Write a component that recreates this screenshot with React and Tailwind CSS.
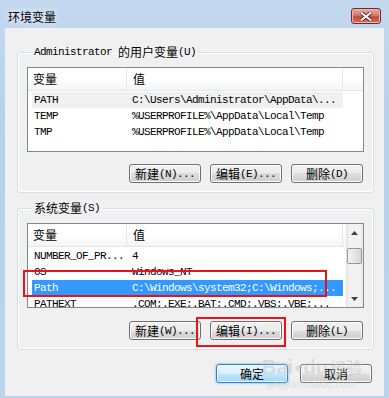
import React from "react";

const CJK = /[\u3000-\u9fff\uff00-\uffef]/;

// split a label into CJK / latin runs so latin gets the narrow mono face
function Txt({ s }) {
  const runs = [];
  for (const ch of s) {
    const c = CJK.test(ch);
    if (runs.length && runs[runs.length - 1].c === c) runs[runs.length - 1].t += ch;
    else runs.push({ c, t: ch });
  }
  return (
    <>
      {runs.map((r, i) =>
        r.c ? (
          <span key={i} className="align-top font-['Noto_Sans_CJK_SC'] text-[12px] leading-[16px]">
            {r.t}
          </span>
        ) : (
          <span
            key={i}
            className="align-top font-['Liberation_Mono'] text-[11px] leading-[16px] tracking-[-0.6px] whitespace-pre"
          >
            {r.t}
          </span>
        )
      )}
    </>
  );
}

function Btn({ label, focus }) {
  return (
    <div
      className={`w-[72px] h-[19px] rounded-[3px] border flex items-center justify-center leading-[16px] text-black ${
        focus
          ? "border-[#3c7fb1] bg-[linear-gradient(#eaf6fd_0%,#d9f0fc_50%,#bee6fd_50%,#a7d9f5_100%)] shadow-[0_0_2px_1px_#9fd5f5,inset_0_0_0_1px_#e9f6fd]"
          : "border-[#707070] bg-[linear-gradient(#f2f2f2_0%,#ebebeb_50%,#dddddd_50%,#cfcfcf_100%)] shadow-[inset_0_0_0_1px_#fcfcfc]"
      }`}
    >
      <Txt s={label} />
    </div>
  );
}

function Scrollbar() {
  return (
    <div className="w-[17px] flex flex-col bg-[linear-gradient(90deg,#e3e3e3,#f2f2f2_20%,#f2f2f2_80%,#e8e8e8)]">
      <div className="h-[17px] flex items-center justify-center">
        <svg width="7" height="4" viewBox="0 0 7 4">
          <path d="M0 4 L3.5 0 L7 4 Z" fill="#404040" />
        </svg>
      </div>
      <div className="mt-[7px] mx-[1px] h-[16px] rounded-[2px] border border-[#979797] bg-[linear-gradient(90deg,#f3f3f3,#e6e6e6_50%,#d6d6d6)]" />
      <div className="flex-1" />
      <div className="h-[17px] flex items-center justify-center">
        <svg width="7" height="4" viewBox="0 0 7 4">
          <path d="M0 0 L3.5 4 L7 0 Z" fill="#404040" />
        </svg>
      </div>
    </div>
  );
}

function VarList({ rows, scroll }) {
  return (
    <div className="h-[85px] border border-[#828790] bg-white flex overflow-hidden">
      <div className="flex-1 min-w-0 flex flex-col">
        <div className="flex h-[23px] shrink-0 border-b border-[#e5e5e5] bg-[linear-gradient(#ffffff,#ffffff_50%,#f3f4f6)]">
          <div className="w-[99px] shrink-0 border-r border-[#e3e8ee] pl-[5px] flex items-center">
            <Txt s="变量" />
          </div>
          <div className="w-[216px] shrink-0 border-r border-[#e3e8ee] pl-[6px] flex items-center">
            <Txt s="值" />
          </div>
          <div className="flex-1" />
        </div>
        <div className="pt-[1px] flex flex-col">
          {rows.map((r) => (
            <div
              key={r.name}
              className={`ml-[4px] w-[311px] h-[16px] shrink-0 flex leading-[16px] whitespace-nowrap ${
                r.sel ? "bg-[#3399ff] text-white" : r.soft ? "bg-[#f0f0f0] text-black" : "text-black"
              }`}
            >
              <div className="w-[95px] shrink-0 pl-[2px] overflow-hidden">
                <Txt s={r.name} />
              </div>
              <div className="flex-1 pl-[5px] overflow-hidden">
                <Txt s={r.value} />
              </div>
            </div>
          ))}
        </div>
      </div>
      {scroll && <Scrollbar />}
    </div>
  );
}

function Group({ title, children }) {
  return (
    <fieldset className="rounded-[3px] border border-[#d5dfe5] shadow-[inset_0_0_0_1px_#ffffff] px-[9px] pt-[7px] pb-[9px]">
      <legend className="ml-[5px] px-[2px] h-[16px] leading-[16px] text-black">
        <Txt s={title} />
      </legend>
      {children}
    </fieldset>
  );
}

const userVars = [
  { name: "PATH", value: "C:\\Users\\Administrator\\AppData\\...", soft: true },
  { name: "TEMP", value: "%USERPROFILE%\\AppData\\Local\\Temp" },
  { name: "TMP", value: "%USERPROFILE%\\AppData\\Local\\Temp" },
];

const sysVars = [
  { name: "NUMBER_OF_PR...", value: "4" },
  { name: "OS", value: "Windows_NT" },
  { name: "Path", value: "C:\\Windows\\system32;C:\\Windows;...", sel: true },
  { name: "PATHEXT", value: ".COM;.EXE;.BAT;.CMD;.VBS;.VBE;..." },
];

export default function App() {
  return (
    <div className="relative w-[389px] h-[398px] overflow-hidden flex flex-col bg-[linear-gradient(#c4d9ef,#b9d0e9_30%,#bcd3ec)]">
      {/* title bar */}
      <div className="h-[28px] shrink-0 flex items-start justify-between pl-[8px] pr-[8px] pt-[8px]">
        <span className="font-['Noto_Sans_CJK_SC'] text-[12px] leading-[17px] text-black [text-shadow:0_0_6px_#ffffff]">
          环境变量
        </span>
        <div className="w-[30px] h-[16px] rounded-[3px] border border-[#6d2a2a] bg-[linear-gradient(#e9a99f,#d77a6c_45%,#c24b3a_55%,#d06f5c)] shadow-[inset_0_0_0_1px_#f0b8b0] flex items-center justify-center">
          <svg width="12" height="9" viewBox="0 0 12 9">
            <path d="M1.5 1 L10.5 8 M10.5 1 L1.5 8" stroke="#4a2020" strokeWidth="3.6" strokeLinecap="square" />
            <path d="M1.5 1 L10.5 8 M10.5 1 L1.5 8" stroke="#ffffff" strokeWidth="2" strokeLinecap="square" />
          </svg>
        </div>
      </div>

      {/* client area */}
      <div className="mx-[5px] mb-[2px] flex-1 bg-[#f0f0f0] pt-[16px] pl-[12px] pr-[10px] flex flex-col">
        <Group title="Administrator 的用户变量(U)">
          <VarList rows={userVars} />
          <div className="mt-[12px] flex justify-end gap-[9px] pr-[1px]">
            <Btn label="新建(N)..." />
            <Btn label="编辑(E)..." />
            <Btn label="删除(D)" />
          </div>
        </Group>

        <div className="mt-[7px]">
          <Group title="系统变量(S)">
            <VarList rows={sysVars} scroll />
            <div className="mt-[13px] flex justify-end gap-[9px] pr-[1px]">
              <Btn label="新建(W)..." />
              <Btn label="编辑(I)..." />
              <Btn label="删除(L)" />
            </div>
          </Group>
        </div>

        <div className="mt-[14px] flex justify-end gap-[12px] pr-[2px]">
          <Btn label="确定" focus />
          <Btn label="取消" />
        </div>
      </div>

      {/* red annotation boxes */}
      <div className="absolute left-[23px] top-[270px] w-[304px] h-[27px] border-2 border-[#e8141c]" />
      <div className="absolute left-[196px] top-[317px] w-[90px] h-[30px] border-2 border-[#e8141c]" />

      {/* watermark */}
      <div className="absolute left-[262px] top-[356px] flex flex-col items-center opacity-40 pointer-events-none">
        <div className="flex items-end font-['Liberation_Sans'] font-bold text-[20px] leading-[22px] text-[#bdbdbd] [text-shadow:0_0_2px_#ffffff]">
          <span>Bai</span>
          <span className="mx-[1px] text-[14px]">●</span>
          <span>du</span>
          <span className="ml-[2px] font-['Noto_Sans_CJK_SC'] text-[16px]">经验</span>
        </div>
        <span className="font-['Liberation_Sans'] text-[11px] leading-[12px] text-[#c4c4c4]">jingyan.baidu.com</span>
      </div>
    </div>
  );
}
